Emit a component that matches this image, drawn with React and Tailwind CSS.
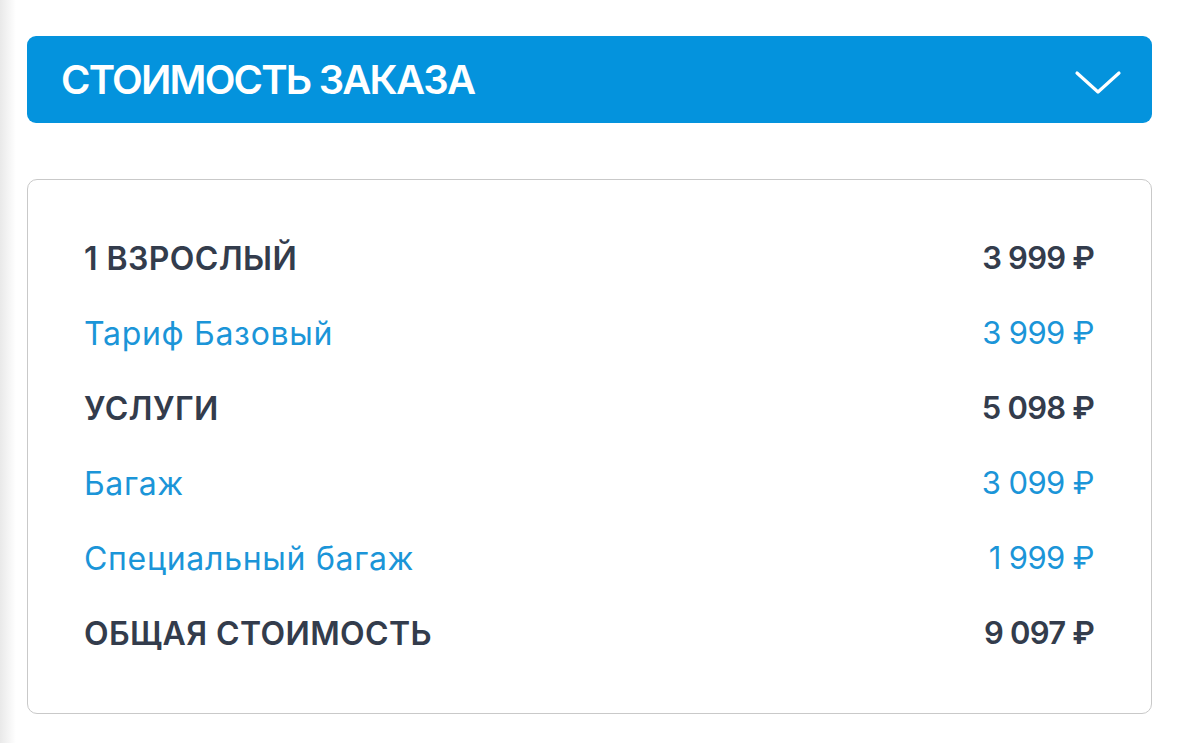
import { useState } from 'react'

const rows = [
  { label: '1 ВЗРОСЛЫЙ', price: '3 999 ₽', main: true },
  { label: 'Тариф Базовый', price: '3 999 ₽' },
  { label: 'УСЛУГИ', price: '5 098 ₽', main: true },
  { label: 'Багаж', price: '3 099 ₽' },
  { label: 'Специальный багаж', price: '1 999 ₽' },
  { label: 'ОБЩАЯ СТОИМОСТЬ', price: '9 097 ₽', main: true },
]

const App = () => {
  const [open, setOpen] = useState(true)

  return (
    <div className="min-h-[743px] bg-white flex font-['Inter',sans-serif]">
      {/* left shade */}
      <div className="w-[16px] shrink-0 bg-gradient-to-r from-[#e9e9e9] to-white" />

      <div className="flex-1 pl-[11px] pr-[28px] pt-[36px]">
        {/* header */}
        <div
          onClick={() => setOpen(!open)}
          className="h-[87px] rounded-[9px] bg-[#0493dd] flex items-center justify-between pl-[34px] pr-[30px] cursor-pointer"
        >
          <h2 className="text-white text-[40px] font-semibold tracking-[-1.8px] leading-none">
            СТОИМОСТЬ ЗАКАЗА
          </h2>
          <svg width="48" height="28" viewBox="0 0 48 28" fill="none" className={open ? 'mt-[6px]' : 'mt-[6px] rotate-180'}>
            <path d="M3 4 L24 23 L45 4" stroke="white" strokeWidth="3.2" strokeLinecap="round" strokeLinejoin="round" />
          </svg>
        </div>

        {/* card */}
        {open && (
          <div className="mt-[56px] h-[535px] rounded-[10px] border border-[#c9c9c9] pl-[56px] pr-[57px] pt-[41px]">
            {rows.map((r) => (
              <div key={r.label} className="h-[75px] flex items-center justify-between">
                <span
                  className={
                    r.main
                      ? 'text-[32px] font-semibold text-[#333c4c] tracking-[0.4px]'
                      : 'text-[32px] font-normal text-[#1b95d8] tracking-[0.7px]'
                  }
                >
                  {r.label}
                </span>
                <span
                  className={
                    r.main
                      ? 'text-[31px] font-semibold text-[#333c4c] tracking-[-0.8px]'
                      : 'text-[31px] font-normal text-[#1b95d8] tracking-[-0.6px]'
                  }
                >
                  {r.price}
                </span>
              </div>
            ))}
          </div>
        )}
      </div>
    </div>
  )
}

export default App
